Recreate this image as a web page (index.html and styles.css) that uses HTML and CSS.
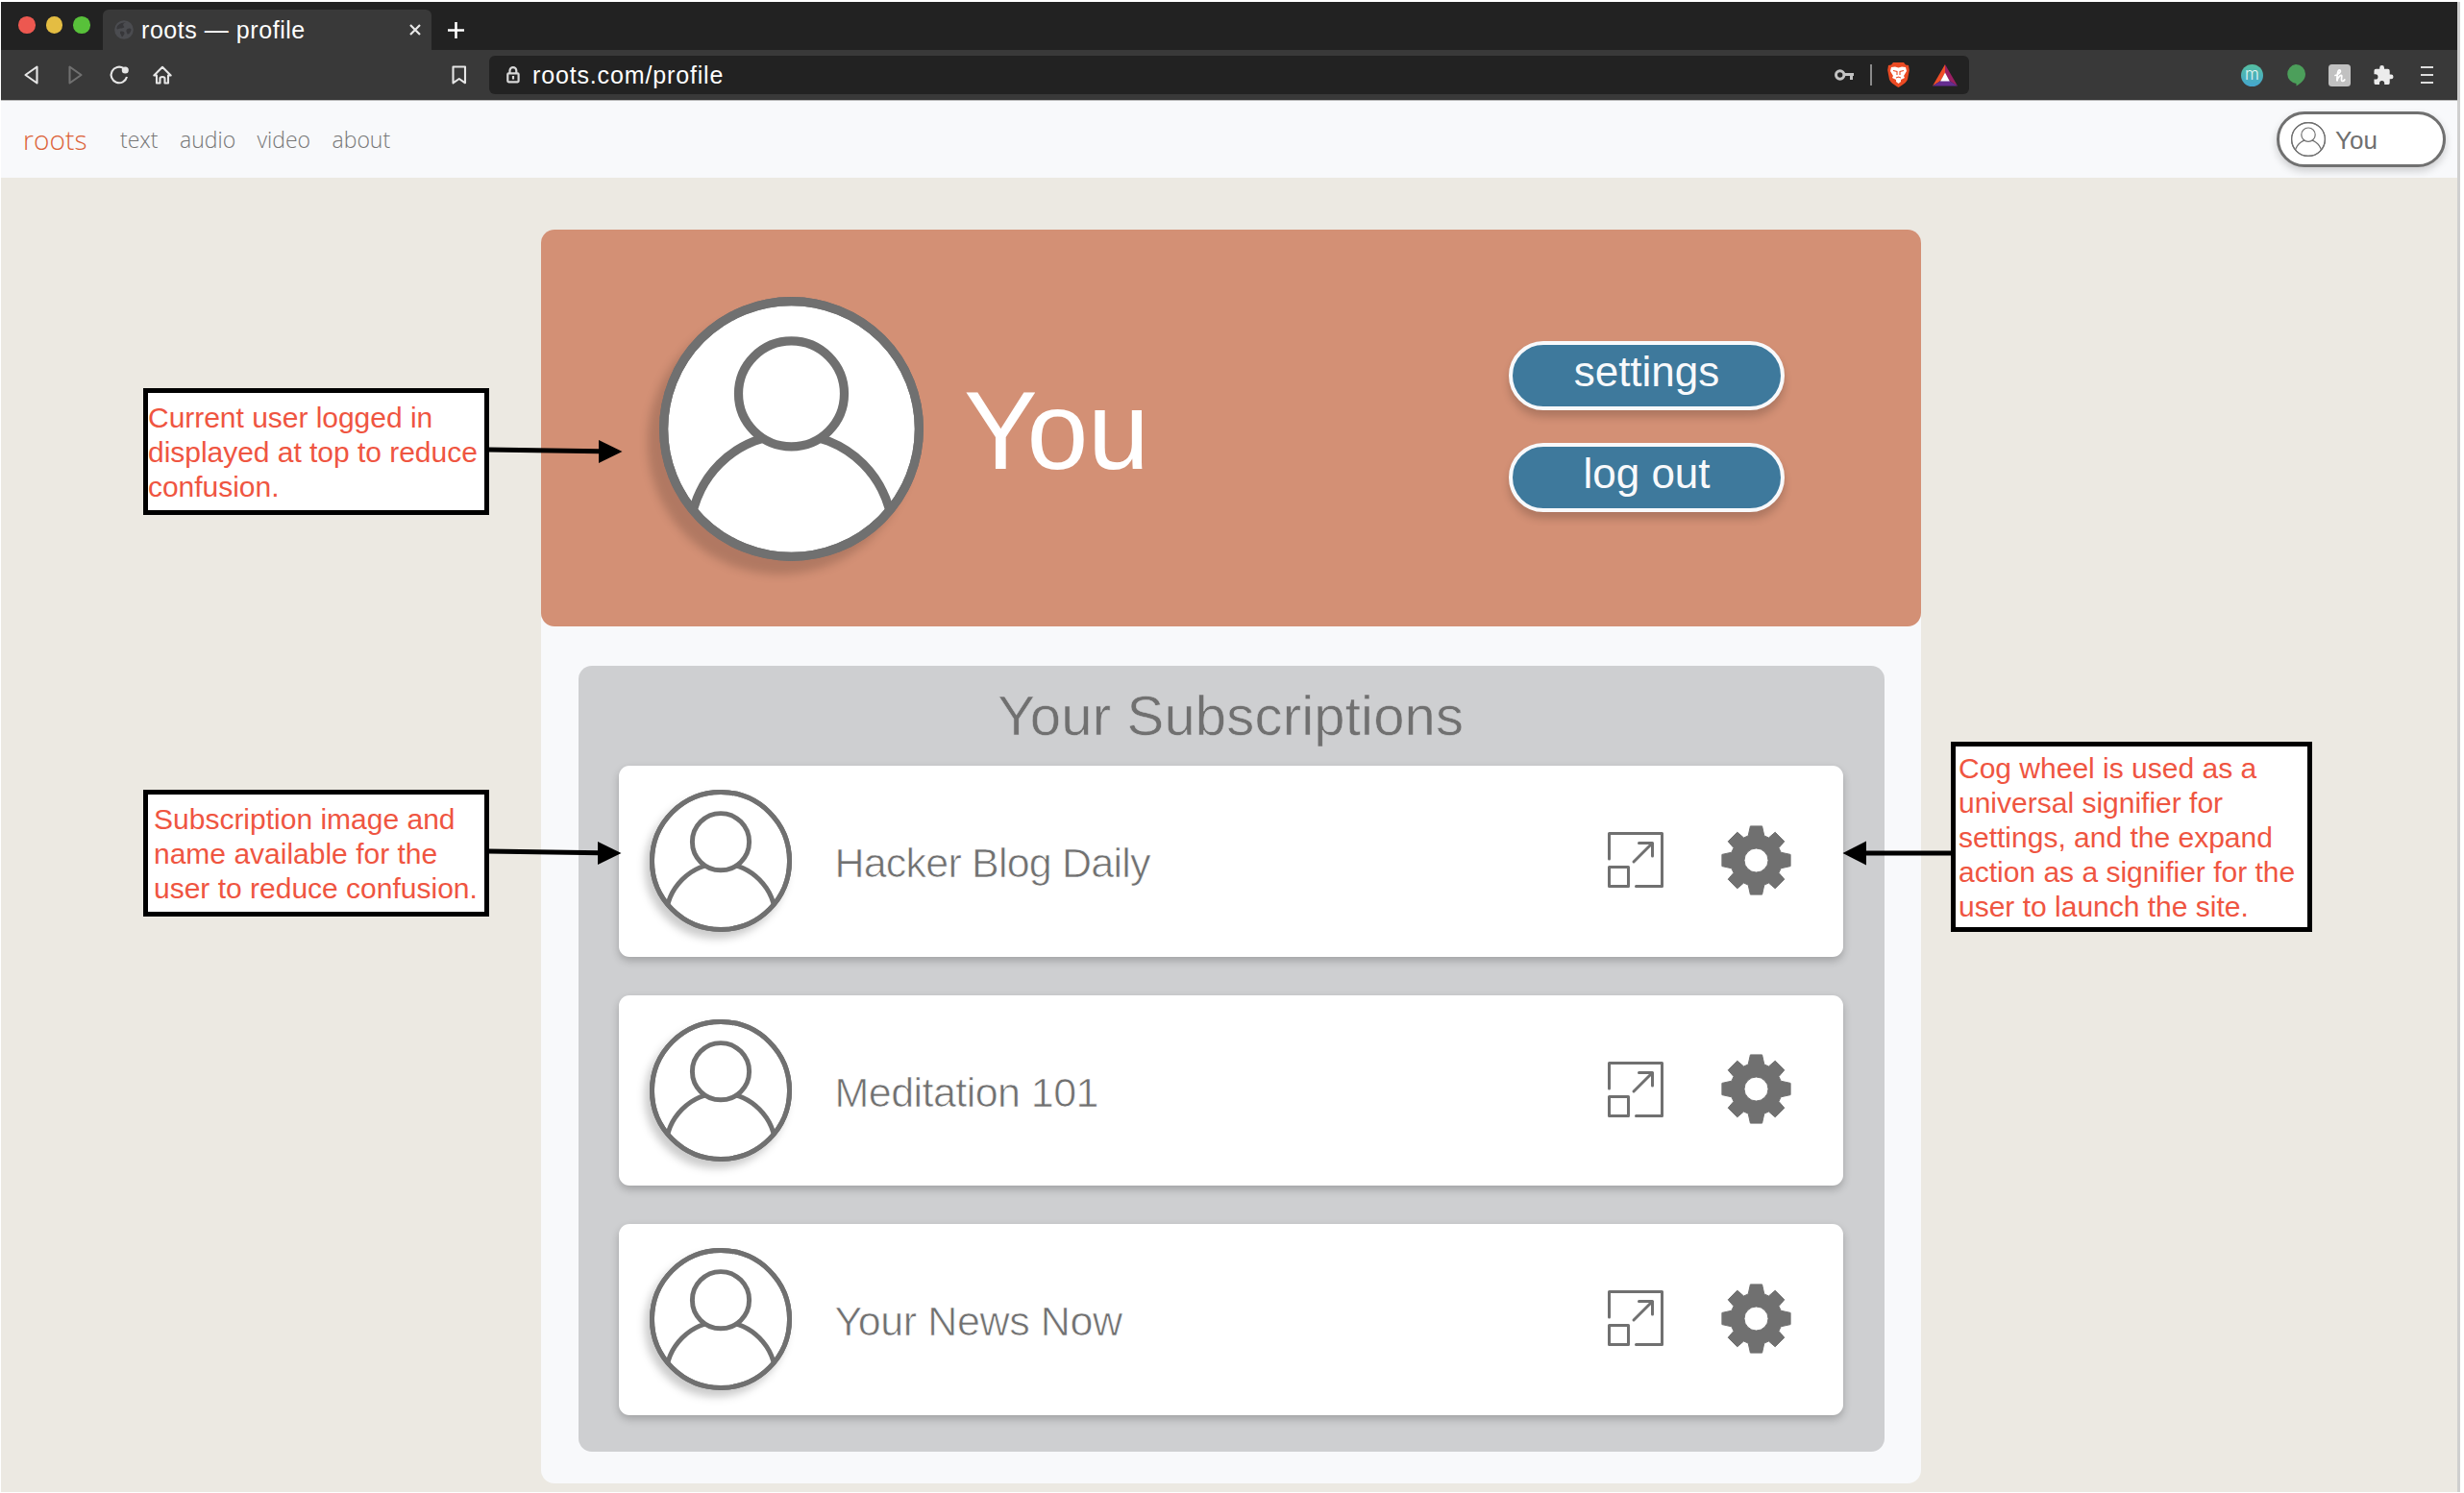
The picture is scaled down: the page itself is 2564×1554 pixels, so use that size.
FILE: index.html
```html
<!DOCTYPE html>
<html lang="en">
<head>
<meta charset="utf-8">
<title>roots — profile</title>
<link rel="stylesheet" href="styles.css">
</head>
<body>
<svg class="defs" aria-hidden="true">
  <symbol id="avatar" viewBox="0 0 275 275">
    <clipPath id="disc"><circle cx="137.5" cy="137.5" r="133"/></clipPath>
    <circle cx="137.5" cy="137.5" r="132.9" fill="#fff"/>
    <circle cx="137.5" cy="248.3" r="105.5" clip-path="url(#disc)"/>
    <circle cx="137.5" cy="100.8" r="55" fill="#fff"/>
    <circle cx="137.5" cy="137.5" r="132.9"/>
  </symbol>
  <symbol id="expand" viewBox="0 0 58 58">
    <path d="M1.5 28V1.5H56.5V56.5H29.5M1.5 36.5H21.5V56.5H1.5ZM27 31L46.5 11.5M32.5 11.5H46.5V25"/>
  </symbol>
  <symbol id="gear" viewBox="-36.5 -36.5 73 73">
    <path fill-rule="evenodd" d="M6.1-35.6L8.3-25.6L13-23.5L19.7-29.3L29.3-19.7L23.5-13L25.6-8.3L35.6-6.1V6.1L25.6 8.3L23.5 13L29.3 19.7L19.7 29.3L13 23.5L8.3 25.6L6.1 35.6H-6.1L-8.3 25.6L-13 23.5L-19.7 29.3L-29.3 19.7L-23.5 13L-25.6 8.3L-35.6 6.1V-6.1L-25.6-8.3L-23.5-13L-29.3-19.7L-19.7-29.3L-13-23.5L-8.3-25.6L-6.1-35.6ZM0-12.5A12.5 12.5 0 1 0 0 12.5A12.5 12.5 0 1 0 0-12.5Z"/>
  </symbol>
</svg>

<div class="window">
  <header class="tabbar">
    <div class="lights"><i class="red"></i><i class="yellow"></i><i class="green"></i></div>
    <div class="tab">
      <svg class="globe" viewBox="0 0 20 20"><circle cx="10" cy="10" r="9.8" fill="#4b4c50"/><path d="M12 2C9 3 8.500 5 10 6.500C11 8 8 8.500 6 8.500C4 9 3 10 2.500 9C2 6 5 3 12 2ZM6 12C8 11 11 12 10.500 14C9.500 16 9 17 8 17.500C7 16.500 7.500 15 6 14ZM13 9.500C15 8 17.500 8.500 17.500 10C17 13 15 15 13.500 14.500C13.500 13 11.500 11.500 13 9.500Z" fill="#37373a"/></svg>
      <span class="tab-title">roots — profile</span>
      <svg class="close" viewBox="0 0 12 12"><path d="M1 1L11 11M11 1L1 11"/></svg>
    </div>
    <svg class="plus" viewBox="0 0 17 17"><path d="M8.500 0V17M0 8.500H17"/></svg>
  </header>

  <div class="toolbar">
    <svg class="tool back" viewBox="0 0 16 20"><path d="M13.500 1.500V18.500L1.500 10Z"/></svg>
    <svg class="tool forward" viewBox="0 0 16 20"><path d="M1.500 1.500V18.500L13.500 10Z"/></svg>
    <svg class="tool reload" viewBox="0 0 20 20"><path d="M14.500 3A8.300 8.300 0 1 0 18 12"/><circle cx="16.300" cy="5" r="2.500" fill="#e6e6e6"/></svg>
    <svg class="tool home" viewBox="0 0 20 20"><path d="M1.300 10.500L10 1.800L18.700 10.500H16V18.500H12.500V13.500C12.500 11.500 7.500 11.500 7.500 13.500V18.500H4V10.500Z"/></svg>
    <svg class="tool bookmark" viewBox="0 0 16 20"><path d="M1.500 1.500H14V18.300L7.800 14L1.500 18.300Z"/></svg>
    <div class="address">
      <svg class="lock" viewBox="0 0 14 18"><path d="M3.500 7V4.500A3.400 3.400 0 0 1 10.300 4.500V7"/><rect x="1.300" y="7.300" width="11.300" height="9" rx="1"/><path d="M7 10V13.500"/></svg>
      <span class="url">roots.com/profile</span>
      <svg class="key" viewBox="0 0 21 12"><circle cx="5.700" cy="6" r="4.200"/><path d="M10 5.500H20M17.500 5.500V11"/></svg>
      <i class="divider"></i>
      <svg class="brave" viewBox="0 0 23 26"><path d="M6 0H17L19 2.500L22 3L22.800 8L21 17.500C20 21 15 24 11.500 26C8 24 3 21 2 17.500L.2 8L1 3L4 2.500Z" fill="#eb4b24"/><path d="M4 5L8 4.500L11.500 5.500L15 4.500L19 5L20 9L17 14L18 16L14 18L14 20L11.500 22L9 20V18L5 16L6 14L3 9Z" fill="#fff"/><path d="M6 8.500L10 9.500V13M17 8.500L13 9.500V13M9 16L11.500 15L14 16" fill="none" stroke="#eb4b24" stroke-width="1.100"/></svg>
      <svg class="bat" viewBox="0 0 26 23"><path d="M13 0L0 22.500L8.500 17L13 9Z" fill="#f04e28"/><path d="M13 0L26 22.500L17.500 17L13 9Z" fill="#9b1f63"/><path d="M0 22.500H26L17.500 17H8.500Z" fill="#652d91"/><path d="M13 8.500L17.800 17.500H8.200Z" fill="#fff"/></svg>
    </div>
    <div class="extensions">
      <span class="ext-m">m</span>
      <svg class="ext-g" viewBox="0 0 20 23"><path d="M10 0A10 10 0 0 1 20 10C20 16 15 20 10.500 22.500V19.900A10 10 0 0 1 10 0Z" fill="#4c9f5b"/></svg>
      <svg class="ext-h" viewBox="0 0 23 23"><rect width="23" height="23" rx="3.500" fill="#c1c1c1"/><path d="M7 11.500C10 11 13.500 7.500 12 6C10 5 9 9 8.800 17.500C9.500 13 14 9.500 13.800 12.500C13.500 15 13 17.500 14.500 17.500C15.500 17.500 16.300 16.800 16.800 16" fill="none" stroke="#fff" stroke-width="1.700" stroke-linecap="round"/></svg>
      <svg class="ext-p" viewBox="2 1 21 22"><path fill="#ececec" d="M20.500 11H19V7a2 2 0 0 0-2-2h-4V3.500a2.500 2.500 0 0 0-5 0V5H4a2 2 0 0 0-2 2v3.800h1.500a2.700 2.700 0 0 1 0 5.400H2V20a2 2 0 0 0 2 2h3.800v-1.500a2.700 2.700 0 0 1 5.400 0V22H17a2 2 0 0 0 2-2v-4h1.500a2.500 2.500 0 0 0 0-5z"/></svg>
      <svg class="ext-menu" viewBox="0 0 13 18"><path d="M0 1H13M0 9H13M0 17H13"/></svg>
    </div>
  </div>

  <nav class="navbar">
    <a class="brand">roots</a>
    <a class="link l1">text</a>
    <a class="link l2">audio</a>
    <a class="link l3">video</a>
    <a class="link l4">about</a>
    <div class="user-pill">
      <svg class="avatar small"><use href="#avatar"/></svg>
      <span>You</span>
    </div>
  </nav>

  <main class="page">
    <section class="card">
      <div class="hero">
        <svg class="avatar large"><use href="#avatar"/></svg>
        <h1>You</h1>
        <div class="actions">
          <button class="b1">settings</button>
          <button class="b2">log out</button>
        </div>
      </div>
      <div class="panel">
        <h2>Your Subscriptions</h2>
        <div class="row">
          <svg class="avatar medium"><use href="#avatar"/></svg>
          <span class="name n1">Hacker Blog Daily</span>
          <svg class="expand"><use href="#expand"/></svg>
          <svg class="gear"><use href="#gear"/></svg>
        </div>
        <div class="row">
          <svg class="avatar medium"><use href="#avatar"/></svg>
          <span class="name n2">Meditation 101</span>
          <svg class="expand"><use href="#expand"/></svg>
          <svg class="gear"><use href="#gear"/></svg>
        </div>
        <div class="row">
          <svg class="avatar medium"><use href="#avatar"/></svg>
          <span class="name n3">Your News Now</span>
          <svg class="expand"><use href="#expand"/></svg>
          <svg class="gear"><use href="#gear"/></svg>
        </div>
      </div>
    </section>
  </main>
</div>

<aside class="note note-user">Current user logged in<br>displayed at top to reduce<br>confusion.</aside>
<aside class="note note-sub">Subscription image and<br>name available for the<br>user to reduce confusion.</aside>
<aside class="note note-cog">Cog wheel is used as a<br>universal signifier for<br>settings, and the expand<br>action as a signifier for the<br>user to launch the site.</aside>
<svg class="arrow arrow-user" viewBox="0 0 141 26"><path d="M0 11L117 12.700" stroke="#000" stroke-width="5"/><path d="M116 1L140.500 13L116 25Z"/></svg>
<svg class="arrow arrow-sub" viewBox="0 0 141 26"><path d="M0 11L117 12.700" stroke="#000" stroke-width="5"/><path d="M115 1L139.500 13L115 25Z"/></svg>
<svg class="arrow arrow-cog" viewBox="0 0 114 26"><path d="M114 13H24" stroke="#000" stroke-width="5"/><path d="M25 .5L.5 13L25 25.500Z"/></svg>
</body>
</html>
```
FILE: styles.css
```css
* { box-sizing: border-box; }
body {
  margin: 0;
  width: 2564px;
  height: 1554px;
  padding: 2px 0 0 1px;
  background: #fff;
  overflow: hidden;
  position: relative;
  font-family: "Liberation Sans", Arial, sans-serif;
}
svg { display: block; flex: none; overflow: visible; }
i { display: block; flex: none; }
.defs { position: absolute; width: 0; height: 0; }

.window {
  width: 2559px;
  height: 1551px;
  display: flex;
  flex-direction: column;
  background: #ece9e2;
  border-right: 3px solid #cfcfcf;
}

/* browser chrome */
.tabbar { height: 50px; background: #222; display: flex; align-items: flex-end; }
.lights { display: flex; gap: 11px; padding-left: 18px; height: 50px; padding-top: 15px; width: 106px; }
.lights i { width: 17.500px; height: 17.500px; border-radius: 50%; }
.red { background: #ed5850; }
.yellow { background: #e4bd42; }
.green { background: #58c13a; }
.tab {
  width: 342px;
  height: 42px;
  background: #393939;
  border-radius: 6px 6px 0 0;
  display: flex;
  align-items: center;
  padding: 0 11px 0 12px;
}
.globe { width: 20px; height: 20px; }
.tab-title { color: #fff; font-size: 25px; letter-spacing: .55px; line-height: 28px; margin: -1px 0 0 8px; flex: 1; white-space: nowrap; }
.close { width: 12px; height: 12px; fill: none; stroke: #e8e8e8; stroke-width: 2.200; }
.plus { width: 17px; height: 17px; margin: 0 0 12.500px 17px; fill: none; stroke: #fff; stroke-width: 2.600; }

.toolbar { height: 53px; background: #393939; border-bottom: 1px solid #b9b9b9; display: flex; align-items: center; }
.tool { fill: none; stroke: #e6e6e6; stroke-width: 2.100; stroke-linejoin: round; height: 20px; }
.back { width: 16px; margin-left: 24px; }
.forward { width: 16px; margin-left: 30px; stroke: #707070; }
.reload { width: 20px; margin-left: 27px; }
.home { width: 20px; margin-left: 25px; }
.bookmark { width: 16px; margin-left: 291px; }
.address {
  width: 1540px;
  height: 40px;
  margin-left: 23px;
  background: #222;
  border-radius: 6px;
  display: flex;
  align-items: center;
  padding: 0 12px 0 18px;
}
.lock { width: 14px; height: 18px; fill: none; stroke: #d8d8d8; stroke-width: 2.200; }
.url { color: #fff; font-size: 25px; letter-spacing: .85px; line-height: 28px; margin-left: 13px; flex: 1; }
.key { width: 21px; height: 12px; fill: none; stroke: #c2c2c2; stroke-width: 3; }
.divider { width: 2px; height: 22px; background: #8a8a8a; margin: 0 16px; }
.brave { width: 23px; height: 26px; }
.bat { width: 26px; height: 23px; margin-left: 24px; }
.extensions { display: flex; align-items: center; margin-left: 283px; }
.ext-m { width: 23px; height: 23px; border-radius: 50%; background: linear-gradient(#55bfa0, #44a5cf); color: #e2f4f6; font: 300 17px/20px Inter, sans-serif; text-align: center; }
.ext-g { width: 20px; height: 23px; margin-left: 24px; }
.ext-h { width: 23px; height: 23px; margin-left: 24px; }
.ext-p { width: 21px; height: 21px; margin-left: 24px; }
.ext-menu { width: 13px; height: 18px; margin-left: 28px; stroke: #ddd; stroke-width: 2; }

/* site navigation */
.navbar { height: 80px; background: #f8f9fb; display: flex; align-items: center; padding: 0 12px 0 23px; font-family: "Open Sans", sans-serif; font-weight: 300; }
.brand { color: #dc6238; font-size: 28px; line-height: 40px; width: 101px; letter-spacing: .1px; }
.link { color: #777; font-size: 23px; line-height: 40px; }
.l1 { width: 62px; }
.l2 { width: 80.500px; }
.l3 { width: 78px; }
.user-pill {
  margin-left: auto;
  width: 176px;
  height: 58px;
  border: 3px solid #707070;
  border-radius: 29px;
  background: #fff;
  display: flex;
  align-items: center;
  padding-left: 12px;
  box-shadow: 0 4px 8px rgba(0, 0, 0, .18);
  color: #707070;
  font: 26px/30px "Liberation Sans", sans-serif;
}
.user-pill span { margin: 2px 0 0 10px; }

.avatar { fill: none; stroke: #707070; stroke-width: 9.200; }
.small { width: 36px; height: 36px; }
.medium { width: 148px; height: 148px; filter: drop-shadow(-5px 7px 4px rgba(0, 0, 0, .2)); }
.large { width: 275px; height: 275px; filter: drop-shadow(-12px 14px 5px rgba(0, 0, 0, .16)); }

/* profile card */
.page { flex: 1; padding: 54px 0 0 562px; }
.card { width: 1436px; height: 1305px; background: #f8f9fb; border-radius: 14px; }
.hero { height: 413px; background: #d39075; border-radius: 14px; display: flex; align-items: center; padding: 2px 142px 0 123px; }
.hero h1 { margin: 3px 0 0 42px; color: #fff; font-weight: 400; font-size: 115px; line-height: 130px; letter-spacing: -.6px; }
.actions { margin-left: auto; display: flex; flex-direction: column; gap: 34px; margin-bottom: 6px; }
.actions button {
  width: 287px;
  height: 72px;
  padding: 0 0 7px;
  border: 4px solid #f8f9fb;
  border-radius: 36px;
  background: #3e799c;
  box-shadow: 0 7px 9px rgba(0, 0, 0, .18);
  color: #f8f9fb;
  font: 44px/50px "Liberation Sans", sans-serif;
}
.panel {
  width: 1359px;
  height: 818px;
  margin: 41px 0 0 38.500px;
  padding: 18.500px 43px 0 42.500px;
  background: #cecfd1;
  border-radius: 14px;
  display: flex;
  flex-direction: column;
}
.panel h2 { margin: 0 0 20.500px; text-align: center; color: #707070; font-weight: 400; font-size: 58px; line-height: 65px; letter-spacing: .2px; -webkit-text-stroke: .6px #cecfd1; }
.row {
  flex: none;
  height: 198.500px;
  margin-bottom: 40px;
  background: #fff;
  border-radius: 11px;
  box-shadow: 0 4px 8px rgba(0, 0, 0, .22);
  display: flex;
  align-items: center;
  padding: 0 53.500px 0 31.500px;
}
.name { flex: 1; margin: 4px 0 0 45px; color: #707070; font-size: 43px; line-height: 50px; -webkit-text-stroke: .7px #fff; }
.n1 { letter-spacing: -.8px; }
.n2 { letter-spacing: -.55px; }
.n3 { letter-spacing: -.4px; }
.expand { width: 58px; height: 58px; margin-top: -2px; fill: none; stroke: #707070; stroke-width: 3; stroke-linecap: round; stroke-linejoin: round; }
.gear { width: 73px; height: 73px; margin: -2.500px 0 0 60px; fill: #707070; stroke: #707070; stroke-width: 1; stroke-linejoin: round; }

/* annotations pinned over the mockup */
.note { position: absolute; background: #fff; border: 5px solid #000; color: #ef5541; font-size: 30px; line-height: 36px; white-space: nowrap; }
.note-user { left: 149px; top: 404px; width: 360px; height: 132px; padding: 8px 0 0; text-indent: 0; }
.note-user { padding-left: 0; letter-spacing: -.03px; }
.note-sub { left: 149px; top: 822px; width: 360px; height: 132px; padding: 8px 0 0 6px; }
.note-cog { left: 2030px; top: 772px; width: 376px; height: 198px; padding: 5px 0 0 3px; }
.arrow { position: absolute; height: 26px; }
.arrow-user { left: 507px; top: 457px; width: 141px; }
.arrow-sub { left: 507px; top: 875px; width: 141px; }
.arrow-cog { left: 1917px; top: 875px; width: 114px; }
```
